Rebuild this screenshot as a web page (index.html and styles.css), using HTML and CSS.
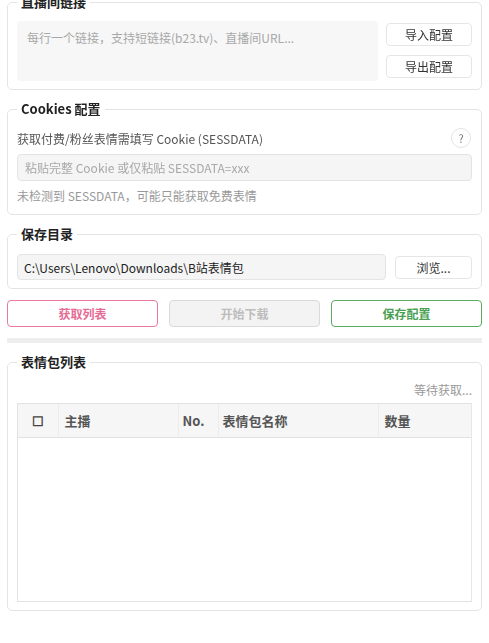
FILE: index.html
```html
<!DOCTYPE html>
<html lang="zh-CN">
<head>
    <meta charset="UTF-8">
    <meta name="viewport" content="width=device-width, initial-scale=1.0">
    <title>B站表情包下载</title>
    <link rel="stylesheet" href="styles.css">
</head>
<body>

    <div class="page">
        <fieldset class="group group-links">
            <legend>直播间链接</legend>
            <div class="links-row">
                <textarea id="links" placeholder="每行一个链接，支持短链接(b23.tv)、直播间URL..." autofocus></textarea>
                <div class="side-buttons">
                    <button class="btn-plain">导入配置</button>
                    <button class="btn-plain">导出配置</button>
                </div>
            </div>
        </fieldset>

        <fieldset class="group">
            <legend>Cookies 配置</legend>
            <div class="label-row">
                <span>获取付费/粉丝表情需填写 Cookie (SESSDATA)</span>
                <span class="help">?</span>
            </div>
            <input type="text" class="field cookie-input" placeholder="粘贴完整 Cookie 或仅粘贴 SESSDATA=xxx">
            <p class="hint">未检测到 SESSDATA，可能只能获取免费表情</p>
        </fieldset>

        <fieldset class="group">
            <legend>保存目录</legend>
            <div class="dir-row">
                <input type="text" class="field dir-input" value="C:\Users\Lenovo\Downloads\B站表情包">
                <button class="btn-plain btn-browse">浏览...</button>
            </div>
        </fieldset>

        <div class="actions">
            <button class="btn-action btn-fetch">获取列表</button>
            <button class="btn-action btn-start" disabled>开始下载</button>
            <button class="btn-action btn-save">保存配置</button>
        </div>

        <div class="progress"></div>

        <fieldset class="group">
            <legend>表情包列表</legend>
            <div class="status">等待获取...</div>
            <div class="table-wrap">
                <table>
                    <thead>
                        <tr>
                            <th class="col-check">☐</th>
                            <th class="col-anchor">主播</th>
                            <th class="col-no">No.</th>
                            <th class="col-name">表情包名称</th>
                            <th class="col-count">数量</th>
                        </tr>
                    </thead>
                    <tbody id="packs"></tbody>
                </table>
            </div>
        </fieldset>
    </div>

</body>
</html>
```

FILE: styles.css
```css
* {
    box-sizing: border-box;
}
body {
    margin: 0;
    background: #ffffff;
    font-family: "Noto Sans CJK SC", "Noto Sans", sans-serif;
    font-size: 12px;
    color: #333;
}
.page {
    margin: -8px 7px 0 7px;
}

/* Group boxes */
.group {
    margin: 9px 0 0 0;
    padding: 9px 9px 8px 9px;
    border: 1px solid #e4e4e4;
    border-radius: 5px;
    min-width: 0;
}
.group-links {
    margin-top: 0;
}
.group legend {
    padding: 0 4px;
    margin-left: 0;
    font-size: 13px;
    font-weight: bold;
    line-height: 20px;
    color: #222;
}

/* Links */
.links-row {
    display: flex;
    gap: 8px;
}
textarea {
    flex: 1;
    height: 60px;
    padding: 8px 10px;
    border: none;
    border-radius: 3px;
    background: #f7f7f7;
    font-family: inherit;
    font-size: 12px;
    line-height: 18px;
    color: #333;
    resize: none;
    outline: none;
    caret-color: #000;
}
textarea::placeholder,
input::placeholder {
    color: #a8a8a8;
}
.side-buttons {
    width: 86px;
    display: flex;
    flex-direction: column;
    gap: 9px;
    padding-top: 2px;
}
.btn-plain {
    height: 23px;
    background: #fff;
    border: 1px solid #e6e6e6;
    border-radius: 4px;
    font-family: inherit;
    font-size: 12px;
    color: #333;
    cursor: pointer;
}

/* Cookies */
.label-row {
    display: flex;
    justify-content: space-between;
    align-items: center;
    height: 20px;
    color: #555;
}
.help {
    width: 20px;
    height: 20px;
    margin-right: 1px;
    border: 1px solid #e2e2e2;
    border-radius: 50%;
    display: flex;
    align-items: center;
    justify-content: center;
    font-size: 11px;
    color: #777;
}
.field {
    width: 100%;
    border: 1px solid #e4e4e4;
    border-radius: 4px;
    background: #f5f5f5;
    font-family: inherit;
    font-size: 12px;
    color: #333;
    outline: none;
}
.cookie-input {
    margin-top: 6px;
    height: 27px;
    padding: 0 7px;
}
.hint {
    margin: 5px 0 0 0;
    line-height: 20px;
    color: #999;
}

/* Save dir */
.dir-row {
    display: flex;
    align-items: center;
    gap: 9px;
    padding-top: 1px;
}
.dir-input {
    flex: 1;
    height: 26px;
    padding: 0 6px;
    color: #222;
}
.btn-browse {
    width: 77px;
}

/* Action buttons */
.actions {
    display: flex;
    gap: 11px;
    margin-top: 11px;
}
.btn-action {
    flex: 1;
    height: 27px;
    background: #fff;
    border: 1px solid;
    border-radius: 4px;
    font-family: inherit;
    font-size: 12px;
    font-weight: 600;
    cursor: pointer;
}
.btn-fetch {
    border-color: #e97aa0;
    color: #e66b95;
}
.btn-start:disabled {
    background: #f3f3f3;
    border-color: #dadada;
    color: #bdbdbd;
    cursor: not-allowed;
}
.btn-save {
    border-color: #5aaa62;
    color: #4a9f53;
}
.progress {
    margin-top: 11px;
    height: 5px;
    background: #eeeeee;
}

/* Table */
.status {
    line-height: 18px;
    text-align: right;
    color: #999;
}
.table-wrap {
    margin-top: 4px;
    height: 199px;
    border: 1px solid #e2e2e2;
    border-right-color: #e8e8e8;
}
table {
    width: 100%;
    border-collapse: collapse;
    table-layout: fixed;
}
th {
    height: 33px;
    padding: 0 6px;
    background: #f6f6f6;
    border-bottom: 1px solid #e2e2e2;
    border-left: 1px solid #ececec;
    font-size: 13px;
    font-weight: 600;
    color: #555;
    text-align: left;
}
th:first-child {
    border-left: none;
}
.col-check {
    width: 40px;
    text-align: center;
    font-weight: bold;
    color: #444;
}
.col-anchor {
    width: 120px;
}
.col-no {
    width: 40px;
    padding-left: 4px;
}
.col-name {
    width: 160px;
    padding-left: 4px;
}
```
